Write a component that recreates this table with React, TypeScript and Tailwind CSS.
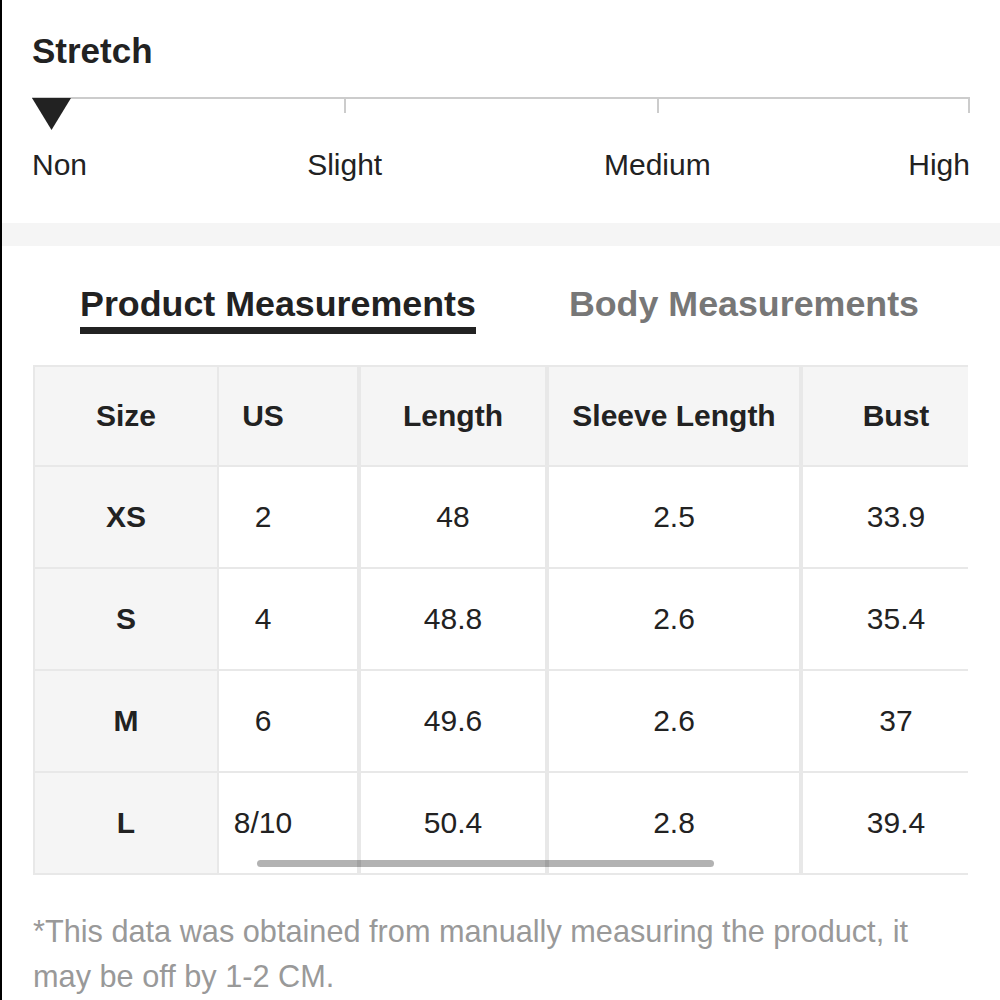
const LEVELS = [
  { label: "Non", align: "justify-start" },
  { label: "Slight", align: "justify-center" },
  { label: "Medium", align: "justify-center" },
  { label: "High", align: "justify-end" },
];

const HEADERS = ["Size", "US", "Length", "Sleeve Length", "Bust"];

const ROWS = [
  ["XS", "2", "48", "2.5", "33.9"],
  ["S", "4", "48.8", "2.6", "35.4"],
  ["M", "6", "49.6", "2.6", "37"],
  ["L", "8/10", "50.4", "2.8", "39.4"],
];

// cell look per column
function cellClass(col: number, header: boolean) {
  const base = "border-2 border-[#e8e8e8] text-center align-middle";
  const h = header ? " h-[100px]" : " h-[102px]";
  const thick = col >= 2 ? " border-l-4" : "";
  const pad = col === 1 ? " pr-[50px]" : "";
  const bg = header || col === 0 ? " bg-[#f5f5f5]" : " bg-white";
  const weight = header || col === 0 ? " font-bold" : " font-normal";
  return base + h + thick + pad + bg + weight;
}

export default function App() {
  return (
    <div
      className="min-h-screen border-l-2 border-black bg-white text-[#222]"
      style={{ fontFamily: '"Liberation Sans", Arial, Helvetica, sans-serif' }}
    >
      {/* Stretch */}
      <section className="pl-[30px] pr-[29px] pt-[33px] pb-[44px]">
        <h2 className="text-[35px] leading-[35px] font-bold">Stretch</h2>
        <svg width="939" height="34" viewBox="0 0 939 34" className="mt-[29px] block">
          <line x1="0" y1="1" x2="938" y2="1" stroke="#cccccc" strokeWidth="2" />
          <line x1="313" y1="0" x2="313" y2="16" stroke="#cccccc" strokeWidth="2" />
          <line x1="626" y1="0" x2="626" y2="16" stroke="#cccccc" strokeWidth="2" />
          <line x1="937" y1="0" x2="937" y2="16" stroke="#cccccc" strokeWidth="2" />
          <polygon points="0,1 39,1 19.5,33" fill="#222222" />
        </svg>
        <div className="mt-[19px] flex justify-between w-[938px] text-[30px] leading-[29px]">
          {LEVELS.map((l) => (
            <div key={l.label} className={"flex w-0 " + l.align}>
              <span className="whitespace-nowrap">{l.label}</span>
            </div>
          ))}
        </div>
      </section>

      <div className="h-[23px] bg-[#f5f5f5]" />

      {/* Tabs */}
      <div className="flex gap-[93px] pl-[78px] pt-[41px] text-[35.8px] leading-[35px] font-bold">
        <div className="inline-flex flex-col">
          <span className="whitespace-nowrap">Product Measurements</span>
          <span className="mt-[5px] h-[7px] bg-[#222]" />
        </div>
        <span className="whitespace-nowrap text-[#777]">Body Measurements</span>
      </div>

      {/* Table */}
      <div className="relative mt-[31px] ml-[31px] w-[935px] overflow-hidden">
        <table className="table-fixed w-[956px] border-collapse text-[30px] leading-[30px]">
          <colgroup>
            <col className="w-[184px]" />
            <col className="w-[141px]" />
            <col className="w-[188px]" />
            <col className="w-[254px]" />
            <col className="w-[189px]" />
          </colgroup>
          <thead>
            <tr>
              {HEADERS.map((h, i) => (
                <th key={h} className={cellClass(i, true)}>
                  {h}
                </th>
              ))}
            </tr>
          </thead>
          <tbody>
            {ROWS.map((r) => (
              <tr key={r[0]}>
                {r.map((v, i) => (
                  <td key={i} className={cellClass(i, false)}>
                    {v}
                  </td>
                ))}
              </tr>
            ))}
          </tbody>
        </table>
        <div className="absolute left-[224px] bottom-[8px] h-[7px] w-[457px] rounded-full bg-black/30" />
      </div>

      <p className="mt-[34px] ml-[31px] w-[935px] text-[30.7px] leading-[45px] text-[#999]">
        *This data was obtained from manually measuring the product, it may be off by 1-2 CM.
      </p>
    </div>
  );
}
